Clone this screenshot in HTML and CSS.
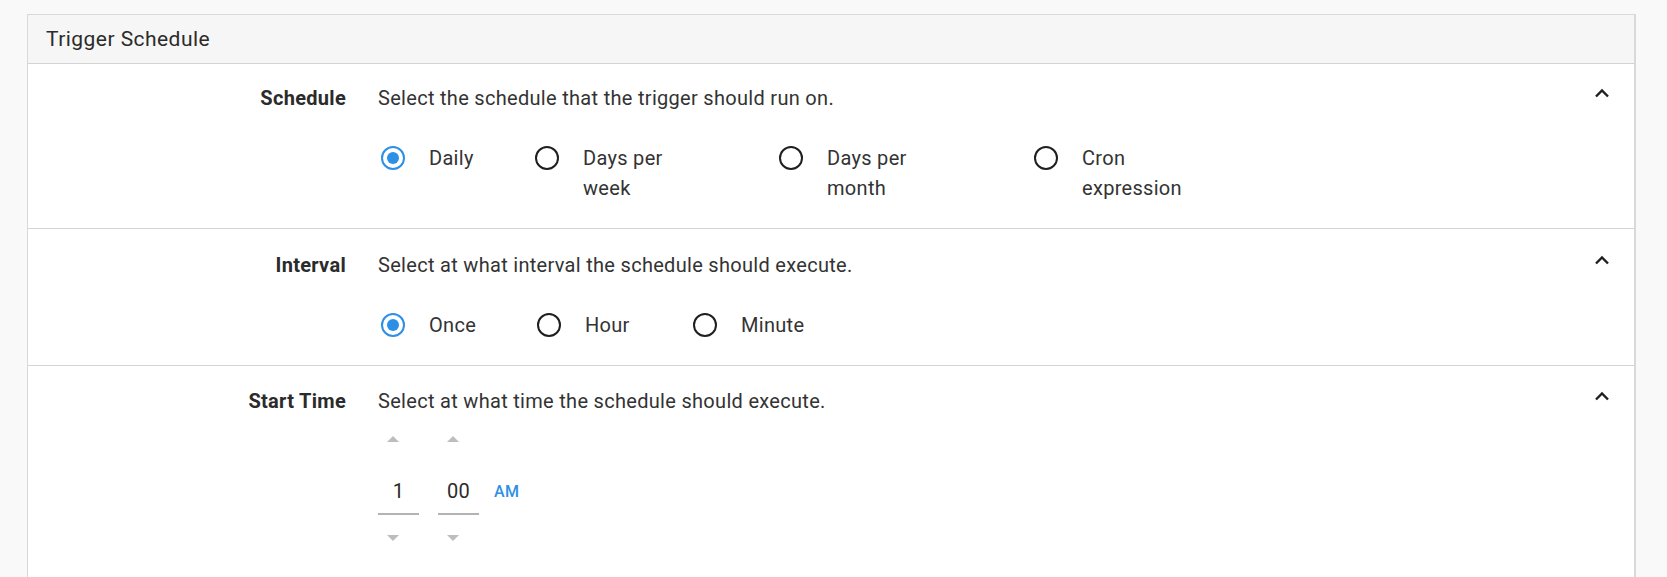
FILE: index.html
```html
<!DOCTYPE html>
<html>
<head>
    <title>Trigger Schedule</title>
    <link rel="stylesheet" href="styles.css">
</head>
<body>
    <div class="card">
        <div class="card-header">Trigger Schedule</div>

        <div class="field-row">
            <div class="field-label">Schedule</div>
            <div class="field-body">
                <div class="field-desc">Select the schedule that the trigger should run on.</div>
                <div class="options schedule-options">
                    <label class="option">
                        <span class="radio checked"></span>
                        <span class="option-text">Daily</span>
                    </label>
                    <label class="option">
                        <span class="radio"></span>
                        <span class="option-text">Days per week</span>
                    </label>
                    <label class="option">
                        <span class="radio"></span>
                        <span class="option-text">Days per month</span>
                    </label>
                    <label class="option">
                        <span class="radio"></span>
                        <span class="option-text">Cron expression</span>
                    </label>
                </div>
            </div>
            <div class="field-toggle">
                <svg width="16" height="10" viewBox="0 0 16 10"><polyline points="2,8.5 8,2.5 14,8.5" fill="none" stroke="#1f1f1f" stroke-width="2.4"/></svg>
            </div>
        </div>

        <div class="field-row">
            <div class="field-label">Interval</div>
            <div class="field-body">
                <div class="field-desc">Select at what interval the schedule should execute.</div>
                <div class="options interval-options">
                    <label class="option">
                        <span class="radio checked"></span>
                        <span class="option-text">Once</span>
                    </label>
                    <label class="option">
                        <span class="radio"></span>
                        <span class="option-text">Hour</span>
                    </label>
                    <label class="option">
                        <span class="radio"></span>
                        <span class="option-text">Minute</span>
                    </label>
                </div>
            </div>
            <div class="field-toggle">
                <svg width="16" height="10" viewBox="0 0 16 10"><polyline points="2,8.5 8,2.5 14,8.5" fill="none" stroke="#1f1f1f" stroke-width="2.4"/></svg>
            </div>
        </div>

        <div class="field-row">
            <div class="field-label">Start Time</div>
            <div class="field-body">
                <div class="field-desc">Select at what time the schedule should execute.</div>
                <div class="time-picker">
                    <div class="time-col">
                        <span class="spin spin-up"></span>
                        <div class="time-value">1</div>
                        <span class="spin spin-down"></span>
                    </div>
                    <div class="time-col">
                        <span class="spin spin-up"></span>
                        <div class="time-value">00</div>
                        <span class="spin spin-down"></span>
                    </div>
                    <div class="meridiem">AM</div>
                </div>
            </div>
            <div class="field-toggle">
                <svg width="16" height="10" viewBox="0 0 16 10"><polyline points="2,8.5 8,2.5 14,8.5" fill="none" stroke="#1f1f1f" stroke-width="2.4"/></svg>
            </div>
        </div>
    </div>
</body>
</html>
```

FILE: styles.css
```css
html, body {
    margin: 0;
    height: 100%;
    overflow: hidden;
}
body {
    font-family: Roboto, "Liberation Sans", sans-serif;
    font-size: 20px;
    letter-spacing: 0.3px;
    color: #333333;
    background-color: #f9f9f9;
    padding: 14px 31px 0 27px;
}
.card {
    background-color: #ffffff;
    border: 1px solid #d9d9d9;
    border-right: 2px solid #d9d9d9;
    border-bottom: none;
    height: 600px;
}
.card-header {
    height: 48px;
    line-height: 48px;
    padding: 0 18px;
    font-size: 21px;
    letter-spacing: 0.45px;
    background-color: #f6f6f6;
    border-bottom: 1px solid #d4d4d4;
    color: #2b2b2b;
}
.field-row {
    display: grid;
    grid-template-columns: 318px 1fr auto;
    column-gap: 32px;
    padding: 21px 24px 25px 0;
    border-bottom: 1px solid #d4d4d4;
    line-height: 30px;
}
.card-header + .field-row {
    padding-top: 19px;
}
.field-row:last-child {
    border-bottom: none;
    padding-top: 20px;
}
.field-label {
    text-align: right;
    font-weight: bold;
    color: #2b2b2b;
}
.field-desc {
    color: #333333;
}
.field-toggle svg {
    display: block;
    margin-top: 5px;
}
.options {
    display: grid;
    margin-top: 30px;
}
.schedule-options {
    grid-template-columns: 154px 244px 255px auto;
}
.interval-options {
    grid-template-columns: 156px 156px auto;
}
.option {
    display: flex;
    align-items: flex-start;
}
.radio {
    box-sizing: border-box;
    flex: none;
    width: 24px;
    height: 24px;
    margin: 3px 24px 0 3px;
    border: 2px solid #1f1f1f;
    border-radius: 50%;
    position: relative;
}
.radio.checked {
    border-color: #2d8fe6;
}
.radio.checked::after {
    content: "";
    position: absolute;
    left: 4px;
    top: 4px;
    width: 12px;
    height: 12px;
    border-radius: 50%;
    background-color: #2d8fe6;
}
.option-text {
    max-width: 110px;
}
.time-picker {
    display: flex;
    align-items: flex-start;
    gap: 19px;
    margin-top: 11px;
}
.time-col {
    width: 41px;
    display: flex;
    flex-direction: column;
}
.spin {
    display: block;
    width: 0;
    height: 0;
    margin-left: 9px;
    border-left: 6px solid transparent;
    border-right: 6px solid transparent;
}
.spin-up {
    border-bottom: 6px solid #bdbdbd;
    margin-top: 9px;
    margin-bottom: 9px;
}
.spin-down {
    border-top: 6px solid #bdbdbd;
    margin-top: 20px;
}
.time-value {
    box-sizing: border-box;
    width: 41px;
    height: 45px;
    line-height: 43px;
    margin-top: 19px;
    text-align: center;
    border-bottom: 2px solid #b3b3b3;
    color: #2b2b2b;
}
.meridiem {
    margin-top: 43px;
    margin-left: -4px;
    line-height: 43px;
    font-size: 16px;
    font-weight: 500;
    color: #2d8fe6;
}
```
